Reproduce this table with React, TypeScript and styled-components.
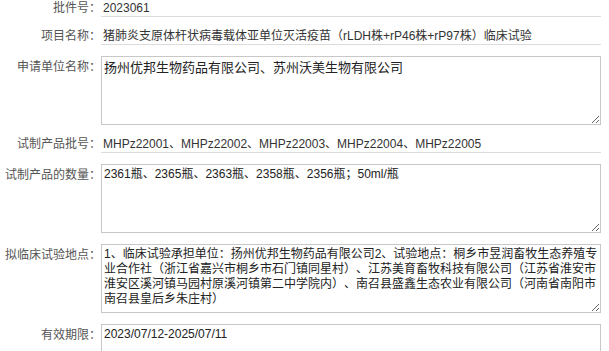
import React, { FC } from 'react';
import styled, { createGlobalStyle } from 'styled-components';

const GlobalStyle = createGlobalStyle`
  html, body {
    margin: 0;
    padding: 0;
    overflow: hidden;
    background: #fff;
  }
  body {
    font-family: "Liberation Sans", "Noto Sans CJK SC", sans-serif;
  }
`;

const Form = styled.div`
  display: flex;
  flex-direction: column;
  gap: 11px;
  width: 601px;
`;

const Row = styled.div`
  display: flex;
  align-items: flex-start;
`;

const Label = styled.div<{ $top?: number }>`
  flex-shrink: 0;
  width: 101px;
  padding-top: ${(p) => p.$top || 0}px;
  text-align: right;
  font-size: 12px;
  line-height: 17px;
  color: #555;
  white-space: nowrap;
`;

const Line = styled.div`
  width: 500px;
  height: 17px;
  padding-left: 2px;
  box-sizing: border-box;
  border-bottom: 1px solid #dcdcdc;
  font-size: 12px;
  line-height: 17px;
  color: #333;
  white-space: nowrap;
  overflow: hidden;
`;

const Box = styled.textarea<{ $size?: number; $lh?: number }>`
  display: block;
  width: 500px;
  height: 69px;
  margin: 0;
  padding: 2px;
  box-sizing: border-box;
  border: 1px solid #c8c8c8;
  border-radius: 0;
  background: #fff;
  font-family: "Liberation Sans", "Noto Sans CJK SC", sans-serif;
  font-size: ${(p) => p.$size || 12}px;
  line-height: ${(p) => p.$lh || 15}px;
  color: #222;
  outline: none;
  text-spacing-trim: space-all;
`;

const sites = '1、临床试验承担单位：扬州优邦生物药品有限公司2、试验地点：桐乡市昱润畜牧生态养殖专业合作社（浙江省嘉兴市桐乡市石门镇同星村）、江苏美育畜牧科技有限公司（江苏省淮安市淮安区溪河镇马园村原溪河镇第二中学院内）、南召县盛鑫生态农业有限公司（河南省南阳市南召县皇后乡朱庄村）';

const App: FC = () => (
  <>
    <GlobalStyle />
    <Form>
      <Row>
        <Label>批件号：</Label>
        <Line>2023061</Line>
      </Row>
      <Row>
        <Label>项目名称：</Label>
        <Line>猪肺炎支原体杆状病毒载体亚单位灭活疫苗（rLDH株+rP46株+rP97株）临床试验</Line>
      </Row>
      <Row>
        <Label $top={3}>申请单位名称：</Label>
        <Box readOnly $size={13} $lh={17} value="扬州优邦生物药品有限公司、苏州沃美生物有限公司" />
      </Row>
      <Row>
        <Label>试制产品批号：</Label>
        <Line>MHPz22001、MHPz22002、MHPz22003、MHPz22004、MHPz22005</Line>
      </Row>
      <Row>
        <Label $top={3}>试制产品的数量：</Label>
        <Box readOnly value="2361瓶、2365瓶、2363瓶、2358瓶、2356瓶；50ml/瓶" />
      </Row>
      <Row>
        <Label $top={3}>拟临床试验地点：</Label>
        <Box readOnly value={sites} />
      </Row>
      <Row>
        <Label $top={3}>有效期限：</Label>
        <Box readOnly value="2023/07/12-2025/07/11" />
      </Row>
    </Form>
  </>
);

export default App;
